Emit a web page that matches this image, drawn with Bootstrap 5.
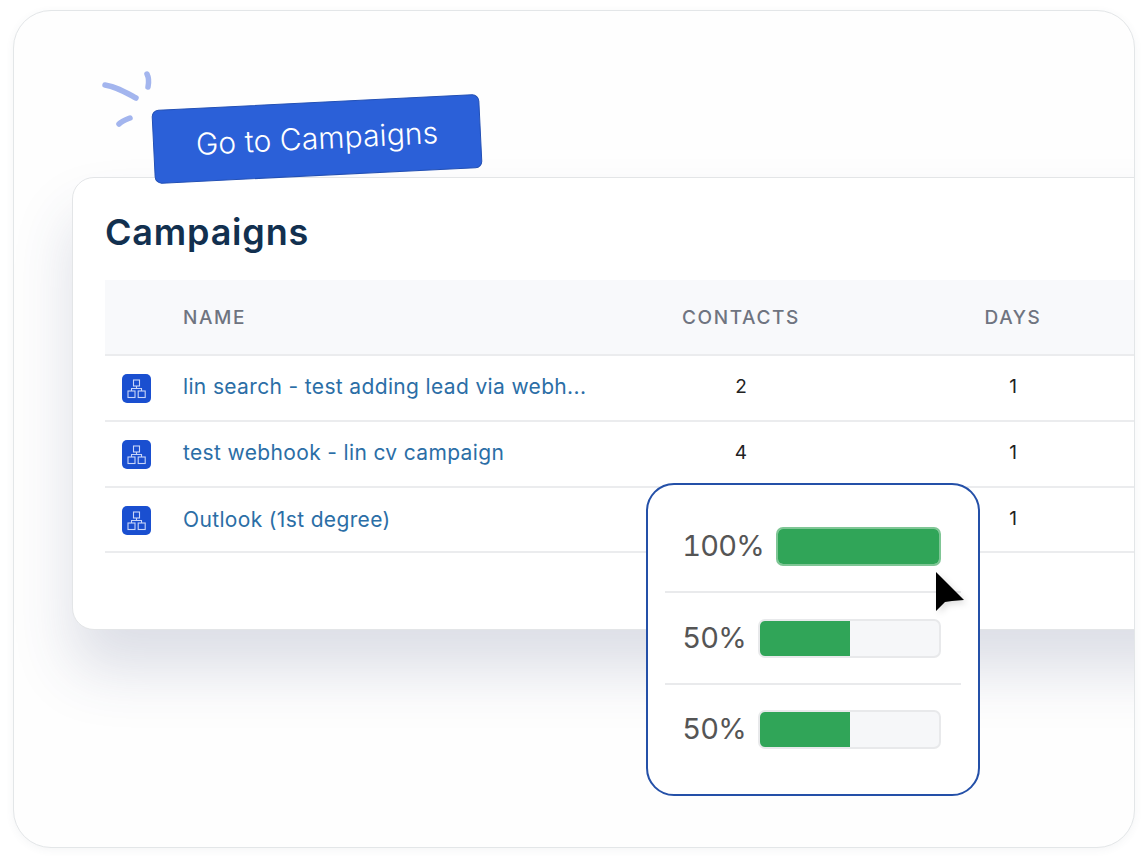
<!DOCTYPE html>
<html lang="en">
<head>
  <meta charset="UTF-8">
  <meta name="viewport" content="width=device-width, initial-scale=1.0">
  <title>Campaigns</title>
  <link href="https://cdn.jsdelivr.net/npm/bootstrap@5.3.0/dist/css/bootstrap.min.css" rel="stylesheet">
  <style>
    body { background: #fff; font-family: "Inter", "Liberation Sans", sans-serif; }
    .frame-box { position: relative; height: 838px; margin: 10px 13px 17px; padding-top: 59px; background: #fefefe; border: 1.5px solid #e3e6e8; border-radius: 38px; box-shadow: 0 2px 8px rgba(60,80,110,.06); overflow: hidden; }
    .top-row { height: 105px; margin-left: 87px; }
    .sparks { width: 54px; height: 60px; flex: none; }
    .go-btn { position: relative; z-index: 2; flex: none; width: 328px; height: 74px; margin-top: 32px; margin-left: -2px; padding: 0 0 2px; background: #2b60d8; border: 1.5px solid #2350b5; border-radius: 7px; color: #fff; font-size: 30px; font-weight: 300; letter-spacing: .1px; transform: rotate(-2.8deg); }
    .go-btn:hover { background: #2b60d8; border-color: #2350b5; color: #fff; }
    .camp-card { height: 453px; margin: 2px -90px 0 58px; padding: 0 32px; background: #fff; border: 1.5px solid #e3e5e7; border-radius: 22px; box-shadow: 0 40px 60px rgba(54,66,110,.17); }
    .camp-title { height: 102px; margin: 0; padding-top: 33px; color: #12304f; font-size: 36px; font-weight: 600; letter-spacing: .8px; }
    .camp-table { width: 1080px; table-layout: fixed; margin: 0; font-size: 19px; }
    .camp-table th, .camp-table td { padding: 0; vertical-align: middle; border-bottom: 2px solid #ebecee; }
    .camp-table th { height: 75px; padding-top: 2px; background: #f8f9fb; color: #6f7480; font-size: 19px; font-weight: 500; letter-spacing: 1.6px; }
    .camp-table td { height: 66px; padding-bottom: 2px; color: #222; }
    .camp-table tbody tr:last-child td { height: 65px; padding-bottom: 0; }
    .camp-table a { color: #2b6ea6; text-decoration: none; font-size: 21px; letter-spacing: .35px; }
    .seq-icon { display: block; width: 29px; height: 29px; margin: 2px 0 0 17px; }
    .score-pop { position: absolute; left: 632px; top: 472px; width: 334px; height: 313px; padding: 16px 17px; background: #fff; border: 2px solid #2450a8; border-radius: 28px; }
    .score-row { height: 92px; padding-right: 20px; border-bottom: 2px solid #e9eaec; color: #555; font-size: 29px; font-weight: 400; font-variant-numeric: tabular-nums; letter-spacing: -.8px; }
    .score-last { border-bottom: 0; padding-bottom: 4px; }
    .score-bar { height: 39px; background: #f6f7f9; border: 2px solid #e8e9eb; border-radius: 7px; }
    .score-bar .progress-bar { background: #30a558; }
    .full-bar { width: 165px; border-color: #7fc695; }
    .half-bar { width: 183px; }
    .arrow-ptr { position: absolute; left: 287px; top: 86px; width: 32px; height: 44px; filter: drop-shadow(3px 3px 3px rgba(0,0,0,.12)); }
  </style>
</head>
<body>
  <div class="frame-box">
    <div class="top-row d-flex align-items-start">
      <svg class="sparks" viewBox="0 0 54 60" fill="none" stroke="#a3b5ee" stroke-width="5.5" stroke-linecap="round">
        <path d="M4 15c12 2 20 7 31 13"/>
        <path d="M46 4c2 4 2 8 1 13"/>
        <path d="M18 54c3-3 6-4 11-6"/>
      </svg>
      <button class="btn go-btn" type="button">Go to Campaigns</button>
    </div>
    <div class="camp-card">
      <h1 class="camp-title">Campaigns</h1>
      <table class="table camp-table">
        <colgroup><col style="width:78px"><col style="width:458px"><col style="width:200px"><col></colgroup>
        <thead>
          <tr><th></th><th>NAME</th><th class="text-center">CONTACTS</th><th class="text-center">DAYS</th></tr>
        </thead>
        <tbody id="rows"></tbody>
      </table>
    </div>
    <div class="score-pop">
      <div class="score-row d-flex align-items-center justify-content-end gap-2">
        <span class="me-1">100%</span>
        <div class="progress score-bar full-bar"><div class="progress-bar" style="width:100%"></div></div>
      </div>
      <div class="score-row d-flex align-items-center justify-content-end gap-2">
        <span class="me-1">50%</span>
        <div class="progress score-bar half-bar"><div class="progress-bar" style="width:50%"></div></div>
      </div>
      <div class="score-row score-last d-flex align-items-center justify-content-end gap-2">
        <span class="me-1">50%</span>
        <div class="progress score-bar half-bar"><div class="progress-bar" style="width:50%"></div></div>
      </div>
      <svg class="arrow-ptr" viewBox="0 0 32 44">
        <path d="M1 1L29 29L17 30L10 31L1 40Z" fill="#000"/>
      </svg>
    </div>
  </div>

  <script>
    const campaigns = [
      ['lin search - test adding lead via webh...', 2, 1],
      ['test webhook - lin cv campaign', 4, 1],
      ['Outlook (1st degree)', '', 1]
    ];
    const icon = `<svg class="seq-icon" viewBox="0 0 29 29"><rect width="29" height="29" rx="5" fill="#1a4fd0"/><g fill="none" stroke="#c9d6f8" stroke-width="1.1"><rect x="11.5" y="6" width="6" height="6"/><rect x="6" y="17" width="7" height="6.5"/><rect x="16.2" y="17" width="7" height="6.5"/><path d="M14.5 12v2.5M9.5 17v-2.5h10V17"/></g></svg>`;
    document.getElementById('rows').innerHTML = campaigns.map(c =>
      `<tr><td>${icon}</td><td><a href="#">${c[0]}</a></td><td class="text-center">${c[1]}</td><td class="text-center">${c[2]}</td></tr>`
    ).join('');
  </script>
  <script src="https://cdn.jsdelivr.net/npm/bootstrap@5.3.0/dist/js/bootstrap.bundle.min.js"></script>
</body>
</html>
